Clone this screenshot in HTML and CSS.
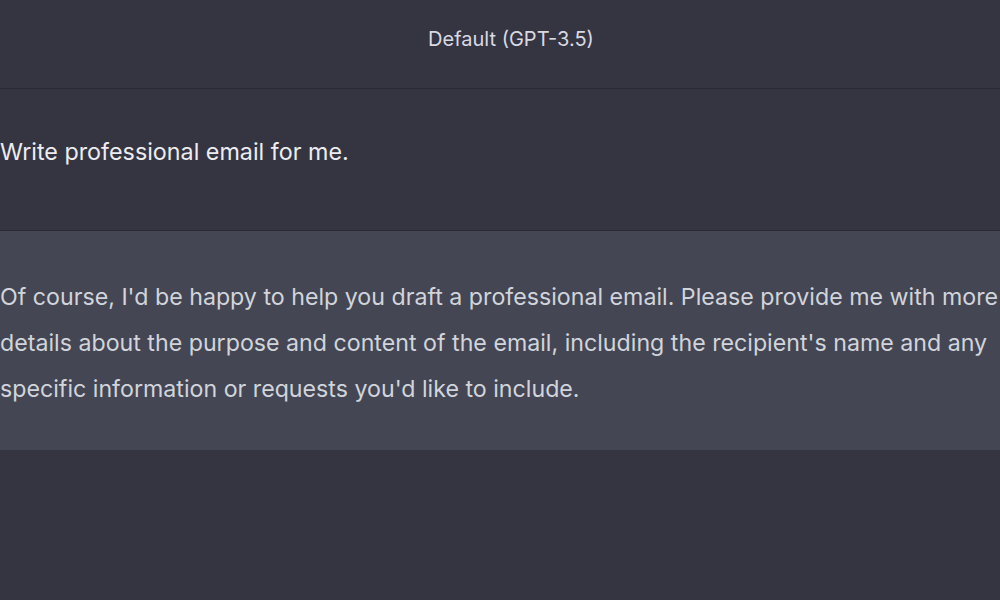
FILE: index.html
```html
<!DOCTYPE html>
<html lang="en">
<head>
  <meta charset="UTF-8" />
  <title>Default (GPT-3.5)</title>
  <link rel="stylesheet" href="styles.css">
</head>
<body>
  <header class="model-bar">Default (GPT-3.5)</header>
  <div class="msg msg-user">
    <p>Write professional email for me.</p>
  </div>
  <div class="msg msg-bot">
    <p>Of course, I'd be happy to help you draft a professional email. Please provide me with more details about the purpose and content of the email, including the recipient's name and any specific information or requests you'd like to include.</p>
  </div>
</body>
</html>
```

FILE: styles.css
```css
html, body {
  margin: 0;
  padding: 0;
  height: 100%;
}
body {
  background: #343541;
  font-family: Inter, "Liberation Sans", sans-serif;
  overflow: hidden;
}
.model-bar {
  height: 89px;
  display: flex;
  align-items: center;
  justify-content: center;
  padding-left: 22px;
  padding-bottom: 10px;
  box-sizing: border-box;
  color: #d9d9e3;
  font-size: 20px;
  border-bottom: 1px solid #292a33;
}
.msg p {
  margin: 0;
  width: 1008px;
}
.msg-user {
  height: 142px;
  box-sizing: border-box;
  padding-top: 40px;
  color: #ececf1;
  font-size: 23.3px;
  line-height: 46px;
  border-bottom: 1px solid #292a33;
}
.msg-bot {
  background: #444654;
  height: 219px;
  box-sizing: border-box;
  padding-top: 43px;
  color: #d1d5db;
  font-size: 23.2px;
  line-height: 46px;
}
```
